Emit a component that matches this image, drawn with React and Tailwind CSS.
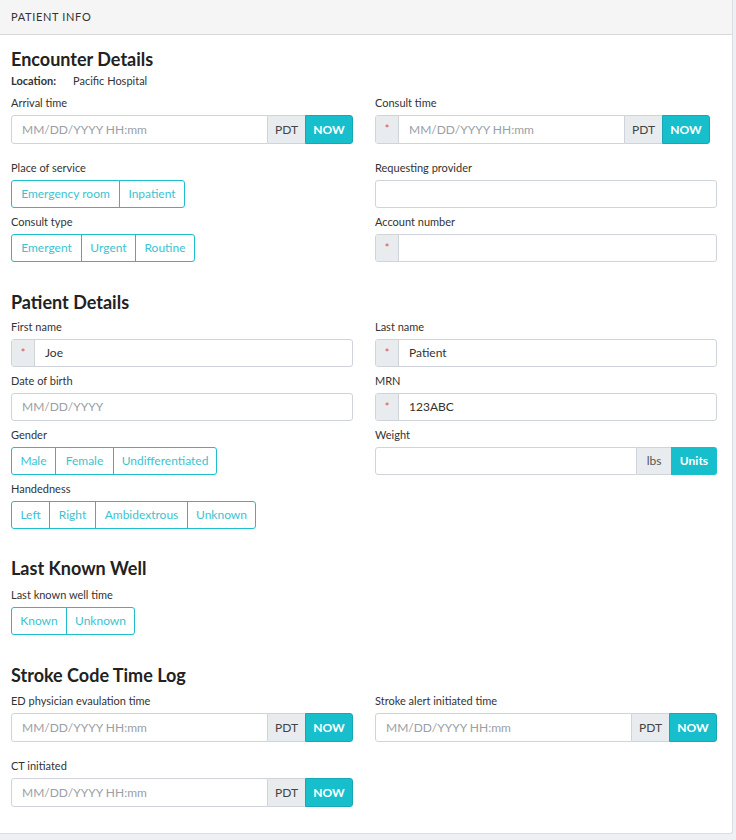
import React from 'react';

const FONT = { fontFamily: 'Lato, "Open Sans", "Liberation Sans", sans-serif' };

function Label({ children }) {
  return <div className="mb-[5px] text-[11px] leading-[14px] text-[#333]">{children}</div>;
}

function Star() {
  return (
    <div className="flex w-[23px] shrink-0 items-center justify-center border-r border-[#cfd4da] bg-[#e9ecef] text-[11px] text-[#d9534f]">
      *
    </div>
  );
}

function TextInput({ value, placeholder, required }) {
  return (
    <div className="flex h-[28px] overflow-hidden rounded-[3px] border border-[#cfd4da] bg-white">
      {required && <Star />}
      <div className={`flex flex-1 items-center px-[10px] text-[12px] ${value ? 'text-[#333]' : 'text-[#9aa0a6]'}`}>
        {value || placeholder}
      </div>
    </div>
  );
}

function TimeInput({ required, className = '' }) {
  return (
    <div className={`flex h-[29px] rounded-[3px] ${className}`}>
      <div className="flex flex-1 overflow-hidden rounded-l-[3px] border border-[#cfd4da] bg-white">
        {required && <Star />}
        <div className="flex flex-1 items-center px-[10px] text-[12px] text-[#9aa0a6]">MM/DD/YYYY HH:mm</div>
      </div>
      <div className="flex w-[37px] items-center justify-center border-y border-[#cfd4da] bg-[#e9ecef] text-[12px] text-[#444]">
        PDT
      </div>
      <button className="w-[48px] rounded-r-[3px] border border-[#15a9b6] bg-[#17bfcd] text-[12px] font-bold text-white">
        NOW
      </button>
    </div>
  );
}

function ButtonGroup({ items }) {
  return (
    <div className="flex h-[28px]">
      {items.map(([name, w], i) => (
        <div
          key={name}
          style={{ width: w }}
          className={`flex items-center justify-center border border-[#1ebecd] text-[12px] text-[#3cc3d1] ${
            i === 0 ? 'rounded-l-[3px]' : '-ml-px'
          } ${i === items.length - 1 ? 'rounded-r-[3px]' : ''}`}
        >
          {name}
        </div>
      ))}
    </div>
  );
}

function Heading({ children, className = '' }) {
  return <h2 className={`text-[18px] font-bold leading-[20px] text-[#222] ${className}`}>{children}</h2>;
}

export default function App() {
  return (
    <div style={FONT} className="min-h-screen bg-[#eef0f3]">
      <div className="w-[733px] rounded-br-[3px] border-r border-b border-[#dadde1] bg-white pb-[26px]">
        <div className="flex h-[35px] items-center border-b border-[#d9d9d9] bg-[#f5f5f5] px-[11px] text-[11px] tracking-[0.06em] text-[#333]">
          PATIENT INFO
        </div>

        <div className="pl-[11px] pr-[15px]">
          {/* Encounter details */}
          <Heading className="mt-[14px]">Encounter Details</Heading>
          <div className="mt-[5px] flex text-[11px] leading-[14px] text-[#333]">
            <span className="w-[62px] font-bold">Location:</span>
            <span>Pacific Hospital</span>
          </div>

          <div className="mt-[8px] grid grid-cols-[342px_342px] gap-x-[22px]">
            <div className="mb-[17px]">
              <Label>Arrival time</Label>
              <TimeInput />
            </div>
            <div className="mb-[17px]">
              <Label>Consult time</Label>
              <TimeInput required className="w-[335px]" />
            </div>

            <div className="mb-[7px]">
              <Label>Place of service</Label>
              <ButtonGroup items={[['Emergency room', 109], ['Inpatient', 66]]} />
            </div>
            <div className="mb-[7px]">
              <Label>Requesting provider</Label>
              <TextInput />
            </div>

            <div>
              <Label>Consult type</Label>
              <ButtonGroup items={[['Emergent', 71], ['Urgent', 55], ['Routine', 60]]} />
            </div>
            <div>
              <Label>Account number</Label>
              <TextInput required />
            </div>
          </div>

          {/* Patient details */}
          <Heading className="mt-[30px]">Patient Details</Heading>
          <div className="mt-[8px] grid grid-cols-[342px_342px] gap-x-[22px] gap-y-[7px]">
            <div>
              <Label>First name</Label>
              <TextInput required value="Joe" />
            </div>
            <div>
              <Label>Last name</Label>
              <TextInput required value="Patient" />
            </div>

            <div>
              <Label>Date of birth</Label>
              <TextInput placeholder="MM/DD/YYYY" />
            </div>
            <div>
              <Label>MRN</Label>
              <TextInput required value="123ABC" />
            </div>

            <div>
              <Label>Gender</Label>
              <ButtonGroup items={[['Male', 45], ['Female', 59], ['Undifferentiated', 104]]} />
            </div>
            <div>
              <Label>Weight</Label>
              <div className="flex h-[28px]">
                <div className="flex-1 rounded-l-[3px] border border-[#cfd4da] bg-white" />
                <div className="flex w-[34px] items-center justify-center border-y border-[#cfd4da] bg-[#e9ecef] text-[12px] text-[#555]">
                  lbs
                </div>
                <button className="w-[46px] rounded-r-[3px] bg-[#17bfcd] text-[12px] font-bold text-white">Units</button>
              </div>
            </div>

            <div>
              <Label>Handedness</Label>
              <ButtonGroup items={[['Left', 39], ['Right', 47], ['Ambidextrous', 93], ['Unknown', 69]]} />
            </div>
          </div>

          {/* Last known well */}
          <Heading className="mt-[29px]">Last Known Well</Heading>
          <div className="mt-[10px]">
            <Label>Last known well time</Label>
            <ButtonGroup items={[['Known', 56], ['Unknown', 69]]} />
          </div>

          {/* Stroke code time log */}
          <Heading className="mt-[30px]">Stroke Code Time Log</Heading>
          <div className="mt-[9px] grid grid-cols-[342px_342px] gap-x-[22px]">
            <div className="mb-[17px]">
              <Label>ED physician evaulation time</Label>
              <TimeInput />
            </div>
            <div className="mb-[17px]">
              <Label>Stroke alert initiated time</Label>
              <TimeInput />
            </div>
            <div>
              <Label>CT initiated</Label>
              <TimeInput />
            </div>
          </div>
        </div>
      </div>
    </div>
  );
}
